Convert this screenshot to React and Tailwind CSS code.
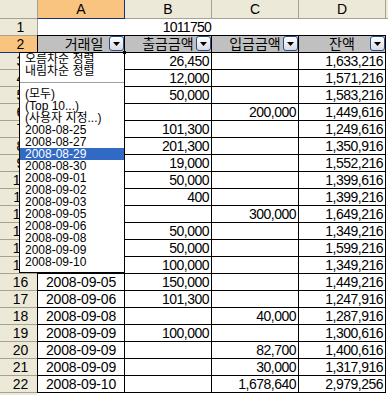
import React from "react";

const rows = [
  [3, "", "26,450", "", "1,633,216"],
  [4, "", "12,000", "", "1,571,216"],
  [5, "", "50,000", "", "1,583,216"],
  [6, "", "", "200,000", "1,449,616"],
  [7, "", "101,300", "", "1,249,616"],
  [8, "", "201,300", "", "1,350,916"],
  [9, "", "19,000", "", "1,552,216"],
  [10, "", "50,000", "", "1,399,616"],
  [11, "", "400", "", "1,399,216"],
  [12, "", "", "300,000", "1,649,216"],
  [13, "", "50,000", "", "1,349,216"],
  [14, "", "50,000", "", "1,599,216"],
  [15, "", "100,000", "", "1,349,216"],
  [16, "2008-09-05", "150,000", "", "1,449,216"],
  [17, "2008-09-06", "101,300", "", "1,247,916"],
  [18, "2008-09-08", "", "40,000", "1,287,916"],
  [19, "2008-09-09", "100,000", "", "1,300,616"],
  [20, "2008-09-09", "", "82,700", "1,400,616"],
  [21, "2008-09-09", "", "30,000", "1,317,916"],
  [22, "2008-09-10", "", "1,678,640", "2,979,256"],
];

const listItems = [
  "(모두)",
  "(Top 10...)",
  "(사용자 지정...)",
  "2008-08-25",
  "2008-08-27",
  "2008-08-29",
  "2008-08-30",
  "2008-09-01",
  "2008-09-02",
  "2008-09-03",
  "2008-09-05",
  "2008-09-06",
  "2008-09-08",
  "2008-09-09",
  "2008-09-10",
];

function FilterBtn() {
  return (
    <div className="absolute right-0 top-0 w-[15px] h-[15px] rounded-[3px] border border-[#244F8C] bg-linear-to-b from-white to-[#D9DAE2] flex items-center justify-center">
      <svg width="7" height="4" viewBox="0 0 7 4">
        <path d="M0 0H7L3.5 4Z" fill="black" />
      </svg>
    </div>
  );
}

function Num({ v }) {
  return (
    <div className="w-[87px] h-full border-r border-b border-black flex items-center justify-end pr-[2px] text-[14px] leading-none tracking-[-0.5px]">
      {v}
    </div>
  );
}

export default function App() {
  return (
    <div className="relative w-[388px] h-[395px] overflow-hidden bg-white text-black font-['Liberation_Sans','Noto_Sans_CJK_KR',sans-serif]">
      {/* column headers */}
      <div className="flex h-[19px]">
        <div className="w-[37px] h-full bg-[#ECE9D8] border-b border-[#A6A290]" />
        <div className="w-[88px] h-full bg-[#F9C47F] border-l border-l-[#A6A290] border-r border-b border-r-[#1B2F7A] border-b-[#1B2F7A] flex items-center justify-center text-[14px] leading-none">
          A
        </div>
        {["B", "C", "D"].map((c) => (
          <div
            key={c}
            className="w-[87px] h-full bg-[#ECE9D8] border-r border-b border-[#A6A290] flex items-center justify-center text-[14px] leading-none"
          >
            {c}
          </div>
        ))}
        <div className="w-[2px] h-full bg-[#ECE9D8] border-b border-[#A6A290]" />
      </div>

      {/* row 1 */}
      <div className="flex h-[16px]">
        <div className="w-[37px] h-full bg-[#ECE9D8] flex items-center justify-center pl-[4px] text-[14px] leading-none">
          1
        </div>
        <div className="w-[88px] h-full border-l border-[#A6A290]" />
        <div className="w-[87px] h-full flex items-center justify-end pr-[1px] text-[14px] leading-none tracking-[-0.75px]">
          1011750
        </div>
        <div className="w-[87px] h-full" />
        <div className="w-[87px] h-full" />
        <div className="w-[2px] h-full" />
      </div>

      {/* row 2 - table header */}
      <div className="flex h-[18px]">
        <div className="w-[37px] h-full bg-[#F9C47F] border-t border-t-[#A6A290] border-b border-b-[#1B2F7A] flex items-center justify-center pl-[4px] text-[14px] leading-none">
          2
        </div>
        <div className="relative w-[88px] h-full bg-[#C0C0C0] border border-black flex items-center justify-center text-[14px] leading-none">
          <span className="pl-[6px]">거래일</span>
          <FilterBtn />
        </div>
        {["출금금액", "입금금액", "잔액"].map((t) => (
          <div
            key={t}
            className="relative w-[87px] h-full bg-[#C0C0C0] border-t border-r border-b border-black flex items-center justify-center text-[14px] leading-none"
          >
            <span>{t}</span>
            <FilterBtn />
          </div>
        ))}
        <div className="w-[2px] h-full" />
      </div>

      {/* data rows */}
      {rows.map(([n, a, b, c, d]) => (
        <div key={n} className="flex h-[17px]">
          <div className="w-[37px] h-full bg-[#ECE9D8] border-b border-[#A6A290] flex items-center justify-center pl-[4px] text-[14px] leading-none">
            {n}
          </div>
          <div className="w-[88px] h-full border-l border-r border-b border-black flex items-center justify-center text-[14px] leading-none tracking-[-0.15px]">
            {a}
          </div>
          <Num v={b} />
          <Num v={c} />
          <Num v={d} />
          <div className="w-[2px] h-full" />
        </div>
      ))}

      {/* row 23 (partial) */}
      <div className="flex h-[17px]">
        <div className="w-[37px] h-full bg-[#ECE9D8] border-b border-[#A6A290]" />
        <div className="flex-1 h-full" />
      </div>

      {/* autofilter dropdown list */}
      <div className="absolute left-[19px] top-[52px] w-[106px] h-[221px] bg-white border border-black text-[12px] leading-[12px]">
        <div className="h-[12px] pl-[5px] whitespace-nowrap">오름차순 정렬</div>
        <div className="h-[12px] pl-[5px] whitespace-nowrap">내림차순 정렬</div>
        <div className="h-[11px] flex items-center">
          <div className="w-full h-px bg-[#A0A0A0]" />
        </div>
        {listItems.map((it) => (
          <div
            key={it}
            className={
              it === "2008-08-29"
                ? "h-[12px] pl-[5px] whitespace-nowrap bg-[#316AC5] text-white"
                : "h-[12px] pl-[5px] whitespace-nowrap"
            }
          >
            {it}
          </div>
        ))}
      </div>

      {/* fill handle of active cell */}
      <div className="absolute left-[123px] top-[51px] w-[3px] h-[3px] bg-black" />
    </div>
  );
}
